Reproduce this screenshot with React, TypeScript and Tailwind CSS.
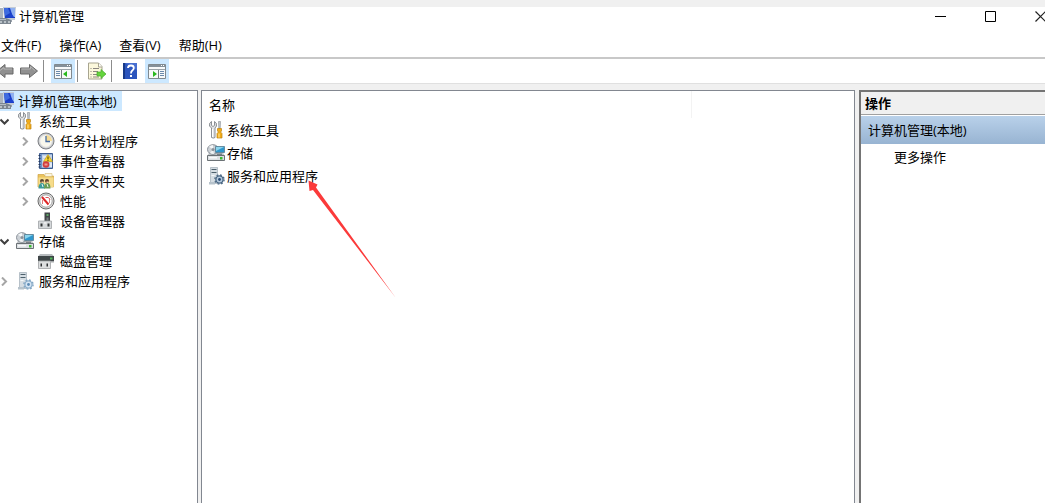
import type { ReactNode } from "react";
import { clsx } from "clsx";

const ComputerIcon = () => (
  <svg className="w-4 h-[18px] shrink-0" viewBox="0 0 16 18" aria-hidden="true">
    <path d="M3 0h13l-1 13H4z" fill="#c3cbd6" />
    <path d="M4 1h11v10H5z" fill="#1a3fc8" />
    <path d="M10 1h5v9h-2z" fill="#8fb0f0" />
    <path d="M11 6l3 4h-5z" fill="#1d44cf" />
    <path d="M4 1h4l2 5-5 3z" fill="#3d6be0" />
    <path d="M0 1h3v11H0z" fill="#a9b2bd" />
    <path d="M6 13h6v2H6z" fill="#9aa2ac" />
    <path d="M0 11h6l5 2v4H0z" fill="#7d8791" />
    <path d="M0 12h6v1H0z" fill="#b4bcc4" />
    <path d="M0 14h2v2H0zM4 14h2v2H4zM8 14h2v2H8z" fill="#b9c1c7" />
  </svg>
);

const ToolsIcon = () => (
  <svg className="w-[18px] h-[18px] shrink-0" viewBox="0 0 18 18" aria-hidden="true">
    <path
      d="M4.500.5v4L6 5.500l1.500-1v-4Q10 1.500 9.500 5L8 7v9.500q-1.800 1.200-3.500 0V7L2.500 5Q2 1.500 4.500.5z"
      fill="#e1e3e5"
      stroke="#80858a"
      strokeWidth=".9"
    />
    <path d="M5.500 8v8" stroke="#fff" />
    <path d="M11.500.5h2l-.3 7h-1.400z" fill="#c6cbd0" stroke="#858b90" strokeWidth=".6" />
    <path
      d="M10.500 7.500h4v2.500l-1 1 1.500 1.500v4.500h-5v-4.500l1.500-1.500-1-1z"
      fill="#f2ac19"
      stroke="#bd820f"
      strokeWidth=".7"
    />
    <path d="M12 12.500v4" stroke="#ffe087" strokeWidth="1.200" />
  </svg>
);

const StorageIcon = () => (
  <svg className="w-[18px] h-[18px] shrink-0" viewBox="0 0 18 18" aria-hidden="true">
    <path d="M2 8.500h14l1.500 3H.5z" fill="#c2c6ca" />
    <ellipse cx="6" cy="5.500" rx="5.500" ry="4.800" fill="#ccd1d6" stroke="#7f878e" strokeWidth=".9" />
    <path d="M6 5.500L2 2.500Q4 1 6 1z" fill="#f5f7f8" />
    <path d="M6 5.500l-3 3.500q2 1.300 4 1z" fill="#f0f3f5" />
    <circle cx="6" cy="5.500" r="1.500" fill="#8a9299" />
    <path d="M8.500 2.500h9v6h-9z" fill="#2f97cd" stroke="#5b7d91" strokeWidth=".8" />
    <path d="M9 3h8L9 7z" fill="#8bd5ee" />
    <path d="M10 9.500h5v1.500h-5z" fill="#777f85" />
    <path d="M.5 11.500h17v5H.5z" fill="#dce0e3" stroke="#5c6368" strokeWidth=".9" />
    <path d="M2 13h8v1.500H2z" fill="#f8f9fa" />
    <path d="M13 13h2.500v2.500H13z" fill="#3dbb31" />
  </svg>
);

const ServicesIcon = ({ dark = false }: { dark?: boolean }) => (
  <svg className="w-[18px] h-[18px] shrink-0" viewBox="0 0 18 18" aria-hidden="true">
    <path d="M3.500.5h7v16h-7z" fill="#d5dde3" stroke="#a1adb7" strokeWidth=".7" />
    <path d="M4.500 2.500h5M4.500 5.500h5" stroke="#4d606c" strokeWidth="1.200" />
    <path d="M4.500 8.500h3" stroke="#f5f8fa" />
    <path d="M2 15h6v2.500H2z" fill="#b6c2cb" />
    <circle
      cx="12.500"
      cy="12.500"
      r="3.600"
      fill={dark ? "#b6cade" : "#d5e5f4"}
      stroke={dark ? "#466481" : "#8caeca"}
      strokeWidth="1.300"
    />
    <circle
      cx="12.500"
      cy="12.500"
      r="4.600"
      fill="none"
      stroke={dark ? "#506c87" : "#84a7c5"}
      strokeWidth="1.400"
      strokeDasharray="1.810 1.810"
    />
    <circle cx="12.500" cy="12.500" r="1.400" fill={dark ? "#294b74" : "#5d8bb5"} />
  </svg>
);

const ClockIcon = () => (
  <svg className="w-[18px] h-[18px] shrink-0" viewBox="0 0 18 18" aria-hidden="true">
    <circle cx="9" cy="9" r="8" fill="#c4c7cb" stroke="#7d7f83" />
    <circle cx="9" cy="9" r="6.200" fill="#f9f8ed" stroke="#e3e3e3" />
    <path d="M9 9V3a6 6 0 016 6z" fill="#f6dc96" />
    <path d="M9 4v5.500h4" fill="none" stroke="#466ba3" strokeWidth="1.300" />
  </svg>
);

const EventIcon = () => (
  <svg className="w-[18px] h-[18px] shrink-0" viewBox="0 0 18 18" aria-hidden="true">
    <path d="M2.500 1.500h13v15h-13z" fill="#6f93c8" stroke="#3e5d90" />
    <path d="M5 2.500h10v13H5z" fill="#c3d3e8" />
    <path d="M6 5h3M6 8h2M13 12h2M13 14h2" stroke="#fff" />
    <path d="M1.500 3.500h2M1.500 6.500h2M1.500 9.500h2M1.500 12.500h2M1.500 15h2" stroke="#26395c" />
    <path d="M11 2.500L15.500 9.500h-9z" fill="#f8d52c" stroke="#bd930d" strokeWidth=".6" />
    <path d="M11 4.500v3M11 8v1" stroke="#4d3b00" />
    <circle cx="9" cy="12.500" r="3.300" fill="#d33c3e" />
    <path d="M7.500 11.500h3v2h-3z" fill="#f19b91" />
  </svg>
);

const SharedFolderIcon = () => (
  <svg className="w-[18px] h-[18px] shrink-0" viewBox="0 0 18 18" aria-hidden="true">
    <path d="M1 2.500h6l1 1.500h8.500v11H1z" fill="#ebc45c" stroke="#cfa243" strokeWidth=".7" />
    <path d="M8 1.500h7v3H8z" fill="#f9f4e0" stroke="#cfb36b" strokeWidth=".5" />
    <path d="M1.500 5.500h15v9.500h-15z" fill="#f6dc8a" />
    <circle cx="5" cy="9" r="2" fill="#594631" />
    <circle cx="10" cy="9" r="2" fill="#6a442d" />
    <path d="M4.500 9.500h2v1.500h-2zM9.500 9.500h2v1.500h-2z" fill="#f3c9a0" />
    <path d="M1.500 16.500q0-5.500 3.500-5.500 3 0 3 5.500z" fill="#3c9b9b" />
    <path d="M7 16.500q0-5.500 3.500-5.500 3 0 3 5.500z" fill="#6a9c55" />
    <path d="M5 12l1 3M10 12l1 3" stroke="#e6f3ef" />
  </svg>
);

const PerformanceIcon = () => (
  <svg className="w-[18px] h-[18px] shrink-0" viewBox="0 0 18 18" aria-hidden="true">
    <circle cx="9" cy="9" r="8" fill="#e0e0e0" stroke="#696969" />
    <circle cx="9" cy="9" r="6.200" fill="#fff" stroke="#8e8e8e" strokeWidth=".8" />
    <path d="M5.500 12V8M12.500 11V6.500" stroke="#e27b7e" />
    <path d="M5 5l6.500 7.500" stroke="#df2627" strokeWidth="2" />
    <path d="M8.500 5.500h3l1.500 2" fill="none" stroke="#d9565a" />
  </svg>
);

const DeviceIcon = () => (
  <svg className="w-[18px] h-[18px] shrink-0" viewBox="0 0 18 18" aria-hidden="true">
    <path d="M7.500.5H13V10H7.500z" fill="#414548" />
    <path d="M9.500 2h2v2h-2z" fill="#5fa866" />
    <path d="M9.500 5.500h2v3h-2z" fill="#747a7e" />
    <path d="M1.500 9h13v7.500h-13z" fill="#d5d8da" stroke="#a0a3a6" strokeWidth=".8" />
    <path d="M3.500 11.500h2v3h-2zM10.500 11.500h2v3h-2z" fill="#303335" />
    <path d="M7 10.500h2.500v1H7z" fill="#fff" />
  </svg>
);

const DiskIcon = () => (
  <svg className="w-[18px] h-[18px] shrink-0" viewBox="0 0 18 18" aria-hidden="true">
    <path d="M3 2h12l2 2.500H1z" fill="#b8bcbf" />
    <path d="M1 4h16v5H1z" fill="#3f4648" />
    <path d="M13 5.500h2.500v2H13z" fill="#4fb858" />
    <path d="M14 9h3v1.500h-3z" fill="#a5a9ab" />
    <path d="M1.500 9h12v7.500h-12z" fill="#dddfe0" stroke="#9fa2a4" strokeWidth=".8" />
    <path d="M3.500 11.500H5v3H3.500zM9.500 11.500H11v3H9.500z" fill="#303335" />
  </svg>
);

const BackIcon = () => (
  <svg className="w-[14px] h-4" viewBox="0 0 14 16" aria-hidden="true">
    <path d="M-3 8l8-6.500V5h8v6H5v3.500z" fill="#919191" stroke="#696969" />
    <path d="M0 7.500l4-3V6h8" fill="none" stroke="#b5b5b5" />
  </svg>
);

const ForwardIcon = () => (
  <svg className="w-[18px] h-4" viewBox="0 0 18 16" aria-hidden="true">
    <path d="M.5 5h9V1.500l8 6.500-8 6.500V11h-9z" fill="#919191" stroke="#696969" />
    <path d="M1.500 6h9V3.500L15 7.500" fill="none" stroke="#b5b5b5" />
  </svg>
);

const PaneIcon = ({ flipped = false }: { flipped?: boolean }) => (
  <svg className="w-[18px] h-4" viewBox="0 0 18 16" aria-hidden="true">
    <path d="M.5 1.500h17v14H.5z" fill="#f7f9fa" stroke="#80898f" />
    <path d="M1 2h16v2H1z" fill="#84909a" />
    <path d="M13 2h1v1h-1zM15 2h1v1h-1z" fill="#fff" />
    <path d="M1 6.500h16" stroke="#9aa3a9" />
    {flipped ? (
      <>
        <path d="M10.500 7v8" stroke="#727b81" />
        <path d="M12 8.500h4M12 10.500h4M12 12.500h4" stroke="#6a8aac" />
        <path d="M5 8v6l4-3z" fill="#28b81d" />
      </>
    ) : (
      <>
        <path d="M7.500 7v8" stroke="#727b81" />
        <path d="M2 8.500h4M2 10.500h4M2 12.500h4" stroke="#6a8aac" />
        <path d="M13 8v6l-4-3z" fill="#28b81d" />
      </>
    )}
  </svg>
);

const ExportIcon = () => (
  <svg className="w-[18px] h-[18px]" viewBox="0 0 18 18" aria-hidden="true">
    <path d="M.5 1h10l3.500 3.500V17H.5z" fill="#fcf8dc" stroke="#a8a590" />
    <path d="M10.500 1v4H14" fill="#fff" stroke="#a8a590" />
    <path d="M2.500 6.500h1M5 6.500h6M2.500 9.500h1M5 9.500h5M2.500 12.500h1M5 12.500h5M2.500 15h1M5 15h6" stroke="#8b8580" />
    <path d="M9 10h4V7.500l5 4.500-5 4.500V14H9z" fill="#65d43d" stroke="#48ab2b" strokeWidth=".7" />
  </svg>
);

const HelpIcon = () => (
  <svg className="w-[14px] h-[18px]" viewBox="0 0 14 18" aria-hidden="true">
    <path d="M0 1h14v16H0z" fill="#2c55bd" />
    <path d="M0 1h2v16H0z" fill="#183a88" />
    <path d="M2 1h12v7z" fill="#486fd0" />
    <path
      d="M5 6q0-2.500 3-2.500 2.800 0 2.800 2.500 0 1.500-1.500 2.500Q8 9.500 8 11.500"
      fill="none"
      stroke="#fff"
      strokeWidth="1.800"
    />
    <path d="M7 13h2v2H7z" fill="#fff" />
  </svg>
);

const Chevron = ({ open }: { open: boolean }) => (
  <svg className="w-[9px] h-[9px]" viewBox="0 0 9 9" fill="none" strokeWidth="2" aria-hidden="true">
    {open ? (
      <path d="M.5 2.500l4 4 4-4" stroke="#404040" />
    ) : (
      <path d="M2 .5l4 4-4 4" stroke="#a6a6a6" />
    )}
  </svg>
);

type TreeNode = {
  label: string;
  icon: ReactNode;
  expandable?: boolean;
  children?: TreeNode[];
};

const tree: TreeNode[] = [
  {
    label: "系统工具",
    icon: <ToolsIcon />,
    expandable: true,
    children: [
      { label: "任务计划程序", icon: <ClockIcon />, expandable: true },
      { label: "事件查看器", icon: <EventIcon />, expandable: true },
      { label: "共享文件夹", icon: <SharedFolderIcon />, expandable: true },
      { label: "性能", icon: <PerformanceIcon />, expandable: true },
      { label: "设备管理器", icon: <DeviceIcon /> },
    ],
  },
  {
    label: "存储",
    icon: <StorageIcon />,
    expandable: true,
    children: [{ label: "磁盘管理", icon: <DiskIcon /> }],
  },
  { label: "服务和应用程序", icon: <ServicesIcon />, expandable: true },
];

const items = [
  { label: "系统工具", icon: <ToolsIcon /> },
  { label: "存储", icon: <StorageIcon /> },
  { label: "服务和应用程序", icon: <ServicesIcon dark /> },
];

const menus = ["文件(F)", "操作(A)", "查看(V)", "帮助(H)"];

const TreeList = ({ nodes, nested = false }: { nodes: TreeNode[]; nested?: boolean }) => (
  <ul className={clsx(nested && "pl-[21px]")}>
    {nodes.map((node) => (
      <li key={node.label}>
        <div className="flex h-5 items-center">
          <span className="flex w-4 shrink-0">
            {node.expandable && (
              <button aria-label={node.label} aria-expanded={!!node.children}>
                <Chevron open={!!node.children} />
              </button>
            )}
          </span>
          <button className="flex items-center gap-[5px] whitespace-nowrap">
            {node.icon}
            {node.label}
          </button>
        </div>
        {node.children && <TreeList nodes={node.children} nested />}
      </li>
    ))}
  </ul>
);

const ToolbarButton = ({
  label,
  active = false,
  children,
}: {
  label: string;
  active?: boolean;
  children: ReactNode;
}) => (
  <button
    aria-label={label}
    className={clsx("flex h-6 w-6 items-center justify-center", active && "bg-[#cce8ff]")}
  >
    {children}
  </button>
);

const Separator = () => <span className="h-[22px] w-px bg-[#8c8c8c]" />;

export default function App() {
  return (
    <div className="flex min-h-screen flex-col overflow-hidden border-t-[7px] border-[#f0f0f0] bg-[#f0f0f0] font-['Open_Sans','Noto_Sans_CJK_SC',sans-serif] text-[13px] leading-5 text-black">
      <header className="bg-white">
        <div className="flex h-[18px] items-center justify-between">
          <h1 className="flex items-center gap-[3px]">
            <ComputerIcon />
            计算机管理
          </h1>
          <div className="flex">
            <button aria-label="最小化" className="flex w-[50px] justify-center">
              <svg className="w-[11px] h-[11px]" viewBox="0 0 11 11" aria-hidden="true">
                <path d="M0 5.500h11" stroke="#000" />
              </svg>
            </button>
            <button aria-label="最大化" className="flex w-[50px] justify-center">
              <svg className="w-[11px] h-[11px]" viewBox="0 0 11 11" aria-hidden="true">
                <path d="M.5.5h10v10H.5z" fill="none" stroke="#000" />
              </svg>
            </button>
            <button aria-label="关闭" className="flex w-[30px] pl-5">
              <svg className="w-[11px] h-[11px] shrink-0" viewBox="0 0 11 11" aria-hidden="true">
                <path d="M.5.5l10 10M10.500.5l-10 10" stroke="#222" strokeWidth="1.200" />
              </svg>
            </button>
          </div>
        </div>
        <nav className="flex h-[34px] gap-[18px] border-b-2 border-[#c8c8c8] pt-2.5 pl-px">
          {menus.map((menu) => (
            <button key={menu} className="h-5 whitespace-nowrap">
              {menu}
            </button>
          ))}
        </nav>
        <div className="flex items-center border-b border-[#e0e0e0]">
          <button aria-label="后退" className="flex w-5">
            <BackIcon />
          </button>
          <button aria-label="前进" className="mr-[5px] flex">
            <ForwardIcon />
          </button>
          <Separator />
          <div className="mr-[2px] ml-[7px] flex">
            <ToolbarButton label="显示/隐藏控制台树" active>
              <PaneIcon />
            </ToolbarButton>
          </div>
          <Separator />
          <div className="mr-[2px] ml-[7px] flex">
            <ToolbarButton label="导出列表">
              <ExportIcon />
            </ToolbarButton>
          </div>
          <Separator />
          <div className="ml-[6px] flex gap-[3px]">
            <ToolbarButton label="帮助">
              <HelpIcon />
            </ToolbarButton>
            <ToolbarButton label="显示/隐藏操作窗格" active>
              <PaneIcon flipped />
            </ToolbarButton>
          </div>
        </div>
      </header>

      <main className="flex flex-1 pt-[6px]">
        <nav className="mr-[3px] w-[198px] shrink-0 border-t border-r border-[#828790] bg-white">
          <button className="flex h-5 items-center bg-[#cce8ff]">
            <span className="w-[14px] overflow-hidden">
              <ComputerIcon />
            </span>
            <span className="pr-[5px] pl-1 whitespace-nowrap">计算机管理(本地)</span>
          </button>
          <TreeList nodes={tree} />
        </nav>

        <section className="relative min-w-0 flex-1 border-x border-t border-[#828790] bg-white">
          <table className="w-full border-collapse text-left">
            <thead>
              <tr className="h-[27px]">
                <th className="w-3/4 border-r border-[#f3f3f3] p-0 pl-[7px] font-normal">名称</th>
                <th className="p-0" />
              </tr>
            </thead>
            <tbody>
              {items.map((item) => (
                <tr key={item.label} className="h-[23px]">
                  <td className="p-0 pl-[5px]" colSpan={2}>
                    <button className="flex items-center gap-[2px]">
                      {item.icon}
                      {item.label}
                    </button>
                  </td>
                </tr>
              ))}
            </tbody>
          </table>
          <svg
            className="pointer-events-none absolute top-[89px] left-[106px] h-[118px] w-[88px]"
            viewBox="0 0 88 118"
            aria-hidden="true"
          >
            <path d="M.5.5l9 4L8 7.500 87.500 117.500 5 10l-3.500 1z" fill="#fb3a3a" />
          </svg>
        </section>

        <aside className="ml-1 w-[186px] shrink-0 border-t-2 border-l-2 border-[#747474] bg-white">
          <h2 className="h-[23px] border-b border-[#a0a0a0] bg-[#f0f0f0] pt-px pl-1 font-bold">
            操作
          </h2>
          <h3 className="mt-px flex h-7 items-center bg-linear-to-b from-[#b9d1ea] to-[#98b4d2] pl-[7px]">
            计算机管理(本地)
          </h3>
          <button className="flex h-[26px] items-center pl-[33px]">更多操作</button>
        </aside>
      </main>
    </div>
  );
}
